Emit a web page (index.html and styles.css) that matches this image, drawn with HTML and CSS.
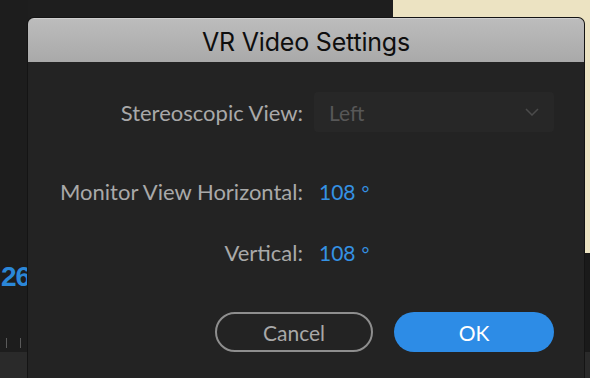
FILE: index.html
```html
<!DOCTYPE html>
<html lang="en">
<head>
    <meta charset="UTF-8">
    <meta name="viewport" content="width=device-width, initial-scale=1.0">
    <title>VR Video Settings</title>
    <link rel="stylesheet" href="styles.css">
</head>
<body>
    <div class="backdrop">
        <div class="side-left">
            <div class="timecode">26</div>
            <div class="ticks"><span></span><span></span></div>
            <div class="track"></div>
        </div>
        <div class="side-mid"></div>
        <div class="side-right">
            <div class="paper"></div>
            <div class="track"></div>
        </div>
    </div>

    <div class="dialog">
        <div class="titlebar">VR Video Settings</div>
        <div class="content">
            <div class="row row-first">
                <label class="label" for="view">Stereoscopic View:</label>
                <div class="select" id="view">
                    <span>Left</span>
                    <svg width="14" height="8" viewBox="0 0 14 8"><path d="M1 1l6 6 6-6" fill="none" stroke="#4b4b4b" stroke-width="1.5"/></svg>
                </div>
            </div>
            <div class="row row-monitor">
                <span class="label">Monitor View Horizontal:</span>
                <span class="value">108<span class="deg">°</span></span>
            </div>
            <div class="row row-vertical">
                <span class="label">Vertical:</span>
                <span class="value">108<span class="deg">°</span></span>
            </div>
            <div class="buttons">
                <button class="btn btn-cancel" type="button">Cancel</button>
                <button class="btn btn-ok" type="button">OK</button>
            </div>
        </div>
    </div>
</body>
</html>
```

FILE: styles.css
```css
body {
    margin: 0;
    padding: 0;
    width: 590px;
    height: 378px;
    overflow: hidden;
    background-color: #1e1e1e;
    font-family: Lato, "Open Sans", sans-serif;
    position: relative;
}

/* app behind the dialog */
.backdrop {
    display: grid;
    grid-template-columns: 28px 365px 197px;
    height: 378px;
}

.side-left {
    display: flex;
    flex-direction: column;
    background-color: #1d1d1d;
}

.timecode {
    margin-top: 262px;
    padding-left: 1px;
    font-family: "Liberation Sans", Arial, sans-serif;
    font-weight: bold;
    font-size: 28px;
    letter-spacing: -1px;
    color: #2b87d8;
    line-height: 30px;
}

.ticks {
    display: flex;
    gap: 13px;
    padding-left: 6px;
    margin-top: 46px;
}

.ticks span {
    width: 1px;
    height: 10px;
    background-color: #5a5a5a;
}

.track {
    margin-top: auto;
    height: 26px;
    background-color: #2a2a2a;
}

.side-right {
    display: flex;
    flex-direction: column;
    background-color: #1a1a1a;
}

.paper {
    height: 253px;
    background-color: #ece3c2;
}

/* dialog */
.dialog {
    position: absolute;
    left: 27px;
    top: 17px;
    width: 556px;
    height: 360px;
    background-color: #232323;
    border: 1px solid #141414;
    border-bottom: none;
    border-radius: 7px 7px 0 0;
    overflow: hidden;
}

.titlebar {
    height: 44px;
    line-height: 47px;
    text-align: center;
    font-family: Inter, "Liberation Sans", sans-serif;
    font-size: 25px;
    letter-spacing: -0.2px;
    color: #0e0e0e;
    background: linear-gradient(#bcbcbc, #a9a9a9);
    border-top: 1px solid #cfcfcf;
    box-sizing: border-box;
}

.content {
    padding: 30px 30px 0 0;
}

.row {
    display: grid;
    grid-template-columns: 275px 1fr;
    column-gap: 11px;
    align-items: center;
    height: 40px;
}

.row-monitor {
    margin-top: 39px;
}

.row-vertical {
    margin-top: 21px;
}

.label {
    text-align: right;
    font-size: 22px;
    color: #a9a9a9;
}

.select {
    display: flex;
    align-items: center;
    justify-content: space-between;
    width: 240px;
    height: 40px;
    box-sizing: border-box;
    padding: 0 15px 0 15px;
    background-color: #272727;
    border-radius: 4px;
    font-size: 21px;
    color: #575757;
}

.value {
    padding-left: 5px;
    font-size: 21px;
    color: #3592e4;
}

.deg {
    margin-left: 6px;
    font-size: 19px;
}

.buttons {
    display: flex;
    justify-content: flex-end;
    gap: 21px;
    margin-top: 40px;
}

.btn {
    height: 40px;
    border-radius: 20px;
    font-family: Lato, "Open Sans", sans-serif;
    font-size: 21px;
    cursor: pointer;
}

.btn-cancel {
    width: 158px;
    background-color: transparent;
    border: 2px solid #8e8e8e;
    color: #a8a8a8;
}

.btn-ok {
    width: 160px;
    background-color: #2d8ce6;
    border: none;
    color: #fff;
}
```
